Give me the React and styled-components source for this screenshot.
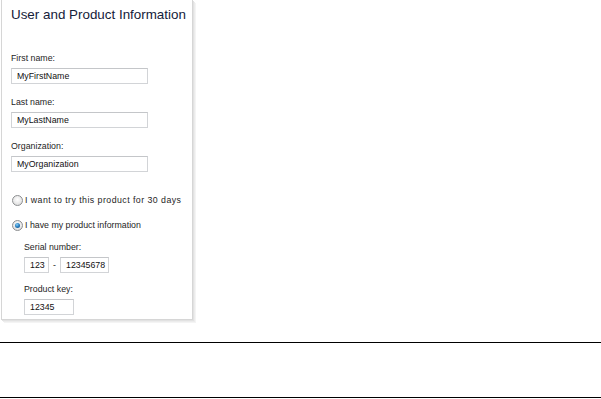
import React from "react";
import styled, { createGlobalStyle } from "styled-components";

const Global = createGlobalStyle`
  html, body { margin: 0; padding: 0; background: #ffffff; }
  body { font-family: "Liberation Sans", Arial, sans-serif; }
`;

const Page = styled.div`
  display: flex;
  flex-direction: column;
  width: 601px;
`;

const Panel = styled.section`
  box-sizing: border-box;
  width: 192px;
  margin-left: 1px;
  padding: 7px 8px 4px 9px;
  border: 1px solid #d6d6d6;
  border-top: none;
  box-shadow: 1px 1px 0 #e2e2e2, 2px 2px 0 #ececec, 3px 3px 0 #f4f4f4;
  display: flex;
  flex-direction: column;
  background: #fff;
`;

const Title = styled.h1`
  margin: 0 0 30px 0;
  font-family: "Liberation Sans", Arial, sans-serif;
  font-weight: normal;
  font-size: 13.4px;
  line-height: 16px;
  color: #14213a;
  white-space: nowrap;
`;

const Field = styled.div`
  display: flex;
  flex-direction: column;
  align-items: flex-start;
  gap: 4px;
  margin-bottom: ${(p) => p.$after ?? 13}px;
`;

const Label = styled.label`
  font-size: 8.8px;
  line-height: 11px;
  color: #1e1e1e;
  white-space: nowrap;
`;

const Input = styled.input`
  box-sizing: border-box;
  width: ${(p) => p.$w}px;
  height: 16px;
  margin: 0;
  padding: 0 0 0 ${(p) => p.$pad ?? 5}px;
  border: 1px solid #d2d4d7;
  border-top-color: #c4c6c9;
  background: #fff;
  font-family: "Liberation Sans", Arial, sans-serif;
  font-size: 8.8px;
  color: #111;
  outline: none;
`;

const RadioRow = styled.label`
  display: flex;
  align-items: center;
  gap: 2px;
  height: 12px;
  margin-left: 1px;
  margin-bottom: ${(p) => p.$after ?? 0}px;
  font-size: 8.8px;
  letter-spacing: ${(p) => p.$spacing ?? 0}px;
  color: #1e1e1e;
  white-space: nowrap;
`;

const RadioDot = styled.span`
  box-sizing: border-box;
  width: 11px;
  height: 11px;
  border-radius: 50%;
  border: 1px solid #8c8e90;
  background: radial-gradient(circle at 50% 40%, #ffffff 0%, #e9e9e9 55%, #cfd0d1 100%);
  display: flex;
  align-items: center;
  justify-content: center;
  flex: none;
  &::after {
    content: "";
    display: ${(p) => (p.$checked ? "block" : "none")};
    width: 5px;
    height: 5px;
    border-radius: 50%;
    background: radial-gradient(circle at 40% 35%, #8fd0f4 0%, #2b84c6 45%, #0d3f73 100%);
  }
`;

const Sub = styled.div`
  display: flex;
  flex-direction: column;
  margin-left: 13px;
  margin-top: 11px;
`;

const SerialRow = styled.div`
  display: flex;
  align-items: center;
`;

const Dash = styled.span`
  width: 11px;
  text-align: center;
  font-size: 8.8px;
  color: #1e1e1e;
`;

const Footer = styled.div`
  margin-top: 22px;
  height: 54px;
  border-top: 1px solid #000;
  border-bottom: 1px solid #000;
`;

export default function App() {
  return (
    <>
      <Global />
      <Page>
        <Panel>
          <Title>User and Product Information</Title>
          <Field>
            <Label>First name:</Label>
            <Input $w={137} defaultValue="MyFirstName" />
          </Field>
          <Field>
            <Label>Last name:</Label>
            <Input $w={137} defaultValue="MyLastName" />
          </Field>
          <Field $after={22}>
            <Label>Organization:</Label>
            <Input $w={137} defaultValue="MyOrganization" />
          </Field>
          <RadioRow $after={13} $spacing={0.45}>
            <RadioDot />
            I want to try this product for 30 days
          </RadioRow>
          <RadioRow>
            <RadioDot $checked />
            I have my product information
          </RadioRow>
          <Sub>
            <Field $after={11}>
              <Label>Serial number:</Label>
              <SerialRow>
                <Input $w={25} defaultValue="123" />
                <Dash>-</Dash>
                <Input $w={49} defaultValue="12345678" />
              </SerialRow>
            </Field>
            <Field $after={0}>
              <Label>Product key:</Label>
              <Input $w={50} defaultValue="12345" />
            </Field>
          </Sub>
        </Panel>
        <Footer />
      </Page>
    </>
  );
}
